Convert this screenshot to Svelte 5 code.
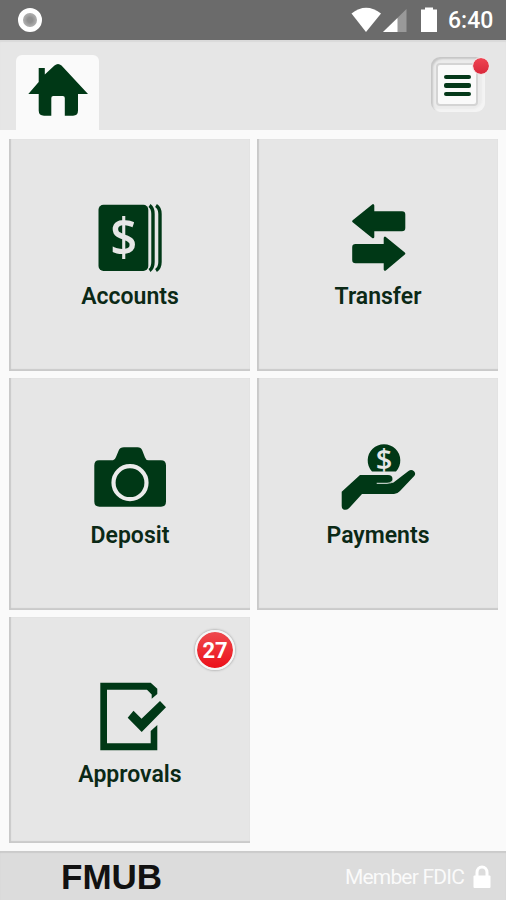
<script>
     let approvals = 27;
     let time = "6:40";

     const tiles = [
          { id: "accounts", label: "Accounts" },
          { id: "transfer", label: "Transfer" },
          { id: "deposit", label: "Deposit" },
          { id: "payments", label: "Payments" },
          { id: "approvals", label: "Approvals" }
     ];
</script>

<div class="screen">
     <div class="status">
          <span class="record"></span>
          <svg class="signals" width="90" height="40" viewBox="0 0 90 40" aria-hidden="true">
               <path d="M0.5 13.5Q15 2 30 13.5L15 32Z" fill="#fff" />
               <path d="M55.5 9V32H32Z" fill="#999" />
               <path d="M46.5 18V32H32Z" fill="#fff" />
               <path d="M71 9.5h3V7.5h8v2h4V32H70V9.5Z" fill="#fff" />
          </svg>
          <span class="time">{time}</span>
     </div>

     <header class="header">
          <button class="tab" type="button" aria-label="Home">
               <svg width="60" height="54" viewBox="0 0 60 54" aria-hidden="true">
                    <path d="M10.7 5H16.8V11.5L26.5 2.6Q30 -.4 33.5 2.6L60 31H50V47.5Q50 52.7 45 52.7H36.8V35Q36.8 33 34.8 33H25.3Q23.3 33 23.3 35V52.7H16Q10.7 52.7 10.7 47.5V31H.3L10.7 19Z" />
               </svg>
          </button>
          <button class="menu" type="button" aria-label="Menu">
               <span class="menu-inner">
                    <i></i>
                    <i></i>
                    <i></i>
               </span>
               <span class="dot"></span>
          </button>
     </header>

     <main class="grid">
          {#each tiles as tile}
               <button class="tile" type="button">
                    <svg class="icon" width="81" height="80" viewBox="0 0 81 80" aria-hidden="true">
                         {#if tile.id === "accounts"}
                              <rect x="9.5" y="7.7" width="49.8" height="66.3" rx="5" />
                              <path class="page" d="M60.5 8.5Q64 11 64 17V65Q64 71 60.5 73.5M67 8.5Q71 11 71 17V65Q71 71 67 73.5" />
                              <text x="38.3" y="59.5" font-size="52" transform="scale(.91 1)">$</text>
                         {:else if tile.id === "transfer"}
                              <path class="round" d="M16.5 24.3 36 8.5V15.5H65Q67 15.5 67 17.5V31Q67 33 65 33H36V40ZM67 56.5 48 41V48.3H18.5Q16.5 48.3 16.5 50.3V63Q16.5 65 18.5 65H48V72.5Z" />
                         {:else if tile.id === "deposit"}
                              <path d="M10 24.3H24Q26 24 27 21L29.7 14.5Q31 11.3 35 11.3H48.5Q52 11.3 53.3 14.5L56 21.5Q57 24.3 59.5 24.3H72Q77 24.3 77 29.5V65.5Q77 70.7 72 70.7H10.5Q5.3 70.7 5.3 65.5V29.5Q5.3 24.3 10 24.3Z" />
                              <circle class="lens" cx="41" cy="46.7" r="16.5" />
                         {:else if tile.id === "payments"}
                              <path d="M35 35.5A16.3 16.3 0 1 1 59 35.5Z" />
                              <text x="47" y="34" font-size="29">$</text>
                              <path d="M23 39H51Q55.5 39 55.5 43.2 55.5 46 53 47.5L56.5 46.5 71.5 34.9Q74.5 33 77 35.3 79.2 37.5 77.2 40L63 55Q60.5 57.9 57 57.9H25L12 72.3Q8.8 75 5.7 73 4.7 72 4.7 70V55.7Z" />
                              <path class="thumb" d="M39.7 47.3H50Q53.5 47.3 55.4 45.2" />
                         {:else}
                              <path d="M11.3 7.7H61.7L68.3 13.8V19L62.7 23.8V19.5L58 14.7H18V68.3H61.7V56L68.3 50V75.3H11.3Z" />
                              <path d="M38.7 42.7 44.5 35.7 52.5 43.7 71 26 77 32.3 52.7 57Z" />
                         {/if}
                    </svg>
                    <span class="label">{tile.label}</span>
                    {#if tile.id === "approvals"}
                         <span class="badge">{approvals}</span>
                    {/if}
               </button>
          {/each}
     </main>

     <footer class="footer">
          <strong>FMUB</strong>
          <span class="fdic">Member FDIC</span>
          <svg width="18" height="24" viewBox="0 0 18 24" aria-hidden="true">
               <path d="M4 11V7.5a5 5.5 0 0 1 10 0V11" fill="none" stroke="#fff" stroke-width="3" />
               <rect x="0.5" y="10.5" width="17" height="12.5" rx="1" fill="#fff" />
          </svg>
     </footer>
</div>

<style>
     :global(body) {
          margin: 0;
     }

     .screen {
          width: 506px;
          height: 900px;
          display: flex;
          flex-direction: column;
          overflow: hidden;
          background: #fafafa;
          font-family: Roboto, "Liberation Sans", sans-serif;
     }

     button {
          border: 0;
          padding: 0;
          font: inherit;
          cursor: pointer;
     }

     svg {
          display: block;
          flex: none;
     }

     .status {
          height: 40px;
          flex: none;
          display: flex;
          align-items: center;
          box-sizing: border-box;
          padding: 0 13px 0 18px;
          background: #6b6b6b;
          color: #fff;
     }

     .record {
          width: 14px;
          height: 14px;
          border: 5px solid #fff;
          border-radius: 50%;
          background: radial-gradient(#8f8f8f 25%, #aaa 60%);
     }

     .signals {
          margin-left: auto;
     }

     .time {
          width: 45px;
          margin-left: 7px;
          font-size: 23px;
          line-height: 42px;
          font-weight: 500;
          text-align: right;
          white-space: nowrap;
          padding-top: 2px;
     }

     .header {
          height: 90px;
          flex: none;
          display: flex;
          justify-content: space-between;
          align-items: flex-start;
          box-sizing: border-box;
          padding: 15px 21px 0 16px;
          background: #e6e6e6;
          box-shadow: inset 0 2px 1px #dadada;
     }

     .tab {
          width: 83px;
          height: 75px;
          display: flex;
          justify-content: center;
          align-items: flex-start;
          padding-top: 8px;
          border-radius: 6px 6px 0 0;
          background: #fafafa;
     }

     .tab svg {
          fill: #003816;
     }

     .menu {
          position: relative;
          width: 54px;
          height: 55px;
          display: flex;
          justify-content: center;
          align-items: center;
          box-sizing: border-box;
          margin-top: 2px;
          padding-right: 2px;
          border-radius: 9px;
          background: #ebebeb;
          box-shadow: inset 2px 2px 2px #c6c6c6, inset -3px -3px 2px #f4f4f4;
     }

     .menu-inner {
          width: 42px;
          height: 43px;
          display: flex;
          flex-direction: column;
          justify-content: center;
          align-items: center;
          gap: 4px;
          box-sizing: border-box;
          padding-top: 2px;
          border: 2px solid #d4d4d4;
          border-radius: 4px;
          background: #fafafa;
     }

     .menu-inner i {
          width: 27px;
          height: 4.6px;
          border-radius: 2px;
          background: #043819;
     }

     .dot {
          position: absolute;
          top: 0;
          right: -5px;
          width: 16px;
          height: 16px;
          border: 1px solid #f4e4e4;
          border-radius: 50%;
          background: linear-gradient(#f04452, #d9283b) padding-box;
     }

     .grid {
          height: 704px;
          flex: none;
          display: grid;
          grid-template-columns: 241px 241px;
          grid-template-rows: 232px 232px 226px;
          gap: 7px;
          margin: 9px 8px 8px 9px;
     }

     .tile {
          position: relative;
          display: flex;
          flex-direction: column;
          align-items: center;
          padding-top: 58px;
          background: #e6e6e6;
          color: #0b2916;
          box-shadow: inset 2px 0 1px #c9c9c9, inset 0 -2px 1px #cacaca;
     }

     .icon {
          fill: #003816;
     }

     .icon text {
          fill: #e6e6e6;
          font-family: "Open Sans", "Noto Sans", sans-serif;
          font-weight: 600;
          text-anchor: middle;
     }

     .page {
          fill: none;
          stroke: #003816;
          stroke-width: 3.4;
     }

     .round {
          stroke: #003816;
          stroke-width: 2.6;
          stroke-linejoin: round;
     }

     .lens {
          fill: none;
          stroke: #ebebeb;
          stroke-width: 4.2;
     }

     .thumb {
          fill: none;
          stroke: #b9c7be;
          stroke-width: 1.2;
     }

     .label {
          margin-top: 6px;
          padding-left: 1px;
          font-size: 23px;
          font-weight: 600;
          line-height: 28px;
     }

     /* Count bubble over the tile corner */
     .badge {
          position: absolute;
          top: 13px;
          right: 15px;
          width: 36px;
          height: 36px;
          border: 2px solid #f6f6f6;
          border-radius: 50%;
          background: linear-gradient(#ee4a4e, #ec1019) padding-box;
          box-shadow: 0 0 2px 1px #bcbcbc;
          color: #fff;
          font-size: 22px;
          font-weight: 700;
          line-height: 37px;
          text-align: center;
     }

     .footer {
          height: 49px;
          flex: none;
          display: flex;
          align-items: center;
          box-sizing: border-box;
          padding: 2px 15px 0 61px;
          background: #dcdcdc;
          box-shadow: inset 0 2px 1px #cbcbcb;
     }

     .footer strong {
          font-family: "Liberation Sans", Arial, sans-serif;
          font-size: 35px;
          line-height: 40px;
          color: #111;
     }

     .fdic {
          margin: 0 9px 0 auto;
          font-size: 21px;
          letter-spacing: -0.8px;
          color: #fafafa;
     }
</style>
